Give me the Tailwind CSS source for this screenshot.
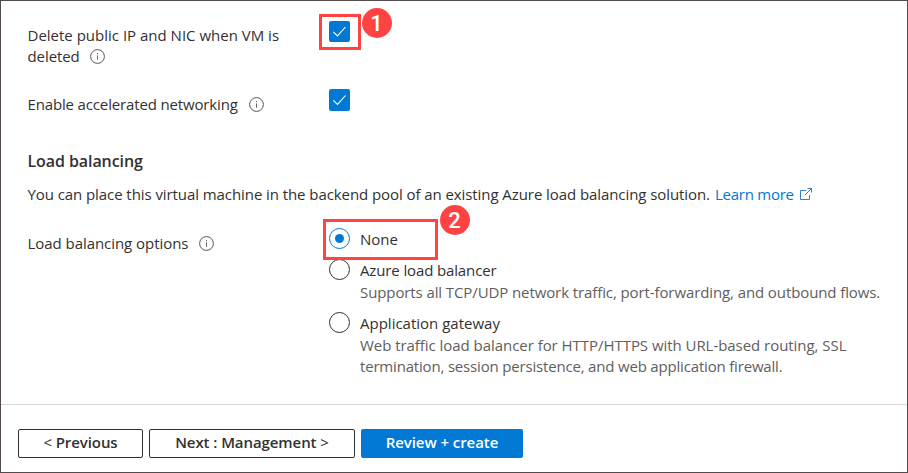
<!DOCTYPE html>
<html lang="en">
<head>
<meta charset="utf-8">
<title>Create a virtual machine</title>
<script src="https://cdn.jsdelivr.net/npm/@tailwindcss/browser@4"></script>
</head>
<body class="bg-white">
<svg class="hidden">
  <symbol id="info" viewBox="0 0 15 15"><circle cx="7.5" cy="7.5" r="6.9" fill="none" stroke="#555" stroke-width="1"/><path d="M7.5 6.4v4.4M7.5 4v1.2" stroke="#666" stroke-width="1" fill="none"/></symbol>
  <symbol id="check" viewBox="0 0 21 21"><path d="M4.3 10.8l4.2 4.1 8-8.9" fill="none" stroke="#fff" stroke-width="1.1"/></symbol>
</svg>
<main class="relative flex h-[473px] w-[908px] flex-col border border-[#524a4d] font-['Open_Sans','Noto_Sans',sans-serif] text-[15px] leading-[21px] text-[#323130]">
  <section class="flex h-[403px] flex-col pl-[26px] whitespace-nowrap">
    <div class="flex pt-5">
      <div class="w-[302px] pt-1">
        <div class="pl-[0.5px]">Delete public IP and NIC when VM is</div>
        <div class="flex items-center"><span class="w-[63px] pl-[0.5px] tracking-[-0.08px]">deleted</span><svg class="size-[15px]"><use href="#info"/></svg></div>
      </div>
      <div class="h-[21px] w-[21px] rounded-[2px] bg-[#0078d4]"><svg class="size-[21px]"><use href="#check"/></svg></div>
    </div>
    <div class="mt-[22px] flex">
      <div class="flex w-[302px] items-center pt-[5px]"><span class="w-[222px] pl-[0.5px] tracking-[-0.15px]">Enable accelerated networking</span><svg class="size-[15px]"><use href="#info"/></svg></div>
      <div class="h-[22px] w-[21px] rounded-[2px] bg-[#0078d4]"><svg class="h-[22px] w-[21px]"><use href="#check"/></svg></div>
    </div>
    <h2 class="mt-[36px] pl-[0.5px] text-[16px] font-semibold tracking-[-0.08px]">Load balancing</h2>
    <div class="mt-[12px] flex">
      <span class="w-[688px] pl-[0.5px] tracking-[-0.075px]">You can place this virtual machine in the backend pool of an existing Azure load balancing solution.</span>
      <a class="flex text-[#0078d4]"><span class="w-[84px] tracking-[-0.25px]">Learn more</span>
        <svg class="mt-[3px] size-[14px]" viewBox="0 0 14 14" fill="none" stroke="#2f7fdc" stroke-width="1"><path d="M7 3.5H1.5v9h9V8M6 8l6.5-6.5M8.5 1.5h4v4"/></svg></a>
    </div>
    <div class="mt-[23px] flex">
      <div class="mt-[5px] flex h-[21px] w-[302px] items-center"><span class="w-[172px] pl-[0.5px] tracking-[-0.05px]">Load balancing options</span><svg class="size-[15px]"><use href="#info"/></svg></div>
      <div>
        <div class="flex h-[31px] gap-[10px]">
          <div class="flex size-[21px] items-center justify-center rounded-full border border-[#0078d4]"><div class="size-[9px] rounded-full bg-[#0078d4]"></div></div>
          <div class="pt-px">None</div>
        </div>
        <div class="flex h-[53px] gap-[10px]">
          <div class="size-[21px] rounded-full border border-[#323130]"></div>
          <div class="pt-px"><div class="tracking-[-0.13px]">Azure load balancer</div><div class="mt-px tracking-[-0.1px] text-[#605e5c]">Supports all TCP/UDP network traffic, port-forwarding, and outbound flows.</div></div>
        </div>
        <div class="flex gap-[10px]">
          <div class="size-[21px] rounded-full border border-[#323130]"></div>
          <div class="pt-px"><div>Application gateway</div><div class="mt-px tracking-[-0.045px] text-[#605e5c]">Web traffic load balancer for HTTP/HTTPS with URL-based routing, SSL</div><div class="tracking-[-0.18px] text-[#605e5c]">termination, session persistence, and web application firewall.</div></div>
        </div>
      </div>
    </div>
  </section>
  <footer class="flex gap-[6px] border-t border-[#d8d8d8] pt-6 pl-[17px] font-semibold">
    <button class="h-[29px] w-[125px] rounded-[2px] border border-[#323130] pb-[3px] tracking-[-0.08px]"><span class="font-normal">&lt;</span> Previous</button>
    <button class="h-[29px] w-[206px] rounded-[2px] border border-[#323130] pb-[3px] tracking-[-0.08px]">Next : Management <span class="font-normal">&gt;</span></button>
    <button class="h-[29px] w-[162px] rounded-[2px] bg-[#0078d4] pb-[3px] tracking-[-0.06px] text-white">Review + create</button>
  </footer>
  <!-- Step callouts -->
  <div class="absolute top-[13px] left-[318px] h-[36px] w-[42px] border-3 border-[#ff4343]"></div>
  <div class="absolute top-[7px] left-[360.5px] flex size-[30px] items-center justify-center rounded-full bg-[#ff4343] font-[Roboto] text-[22px] font-medium text-white">1</div>
  <div class="absolute top-[218px] left-[322px] h-[41px] w-[115px] border-3 border-[#ff4343]"></div>
  <div class="absolute top-[204px] left-[438.5px] flex size-[30px] items-center justify-center rounded-full bg-[#ff4343] font-[Roboto] text-[22px] font-medium text-white">2</div>
</main>
</body>
</html>
